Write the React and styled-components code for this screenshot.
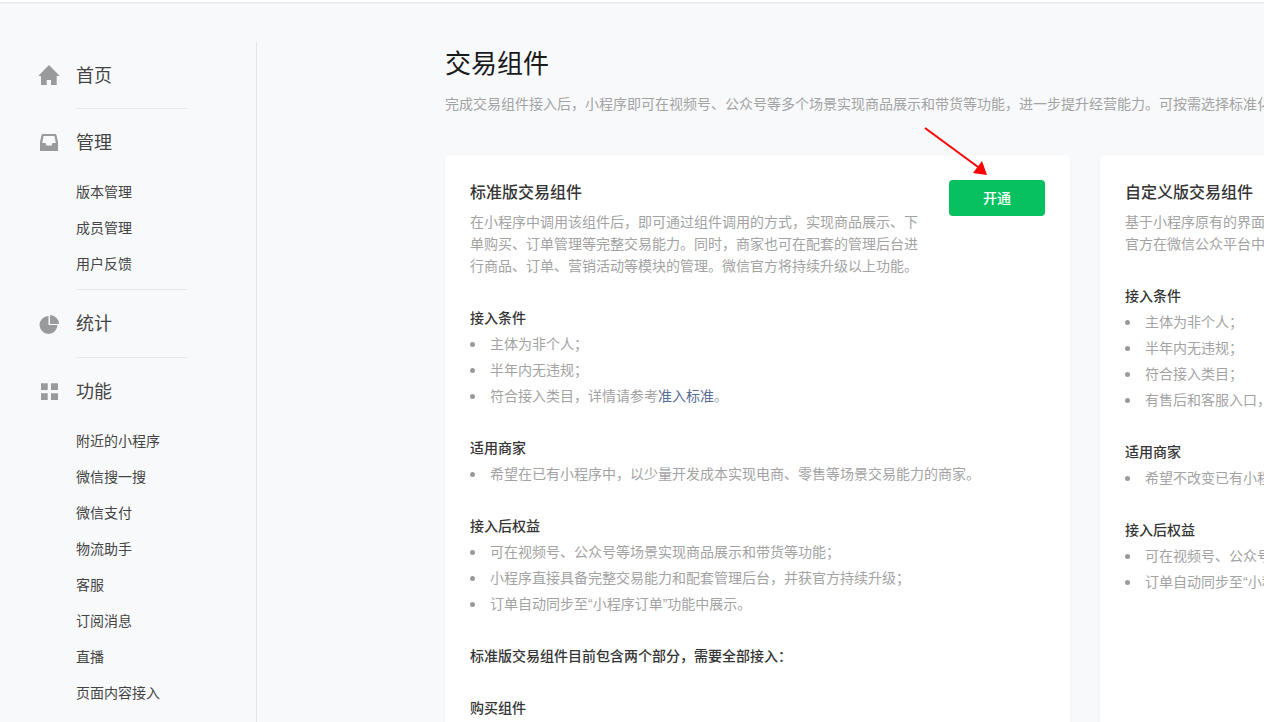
import React from 'react';
import styled, { createGlobalStyle } from 'styled-components';

const FONT = '"Liberation Sans", "Noto Sans CJK SC", sans-serif';

const GlobalStyle = createGlobalStyle`
  html, body {
    margin: 0;
    padding: 0;
    height: 100%;
    overflow: hidden;
    background: #f8f9fb;
  }
  body {
    font-family: ${FONT};
  }
`;

const Page = styled.div`
  position: relative;
  width: 1264px;
  height: 722px;
  overflow: hidden;
  background: #f8f9fb;
`;

const TopBar = styled.div`
  height: 2px;
  background: #fff;
  box-shadow: 0 1px 2px rgba(0, 0, 0, 0.1);
`;

const Layout = styled.div`
  display: flex;
  padding-top: 40px;
`;

const Sidebar = styled.aside`
  box-sizing: border-box;
  flex: 0 0 257px;
  height: 680px;
  border-right: 1px solid #e7e7eb;
  overflow: hidden;
`;

const NavGroup = styled.div`
  margin-left: 76px;
  width: 111px;
  padding-bottom: ${(p) => p.$pad || 0}px;
  border-bottom: ${(p) => (p.$last ? 'none' : '1px solid #e7e7eb')};
`;

const NavHead = styled.div`
  position: relative;
  height: 66px;
  margin-bottom: ${(p) => (p.$sub ? '-1px' : '0')};
  line-height: 68px;
  font-size: 18px;
  color: #444;
  white-space: nowrap;
`;

const NavIcon = styled.svg`
  position: absolute;
  left: -40px;
  top: 20px;
  width: 26px;
  height: 26px;
  fill: #9a9a9a;
`;

const NavItem = styled.div`
  height: 36px;
  line-height: 36px;
  font-size: 14px;
  color: #444;
  white-space: nowrap;
`;

const Main = styled.main`
  flex: 1;
  min-width: 0;
  padding-left: 188px;
`;

const Title = styled.h1`
  margin: 0;
  height: 42px;
  line-height: 44px;
  font-size: 26px;
  font-weight: 400;
  color: #1a1a1a;
`;

const Intro = styled.p`
  margin: 9px 0 0;
  line-height: 22px;
  font-size: 14px;
  color: #a3a3a3;
  white-space: nowrap;
`;

const Cards = styled.div`
  display: flex;
  gap: 30px;
  margin-top: 40px;
`;

const Card = styled.section`
  box-sizing: border-box;
  flex: 0 0 625px;
  height: 900px;
  padding: 25px;
  background: #fff;
  border-radius: 4px;
  box-shadow: 0 1px 4px rgba(0, 0, 0, 0.03);
`;

const CardHead = styled.div`
  display: flex;
  justify-content: space-between;
  align-items: flex-start;
`;

const CardText = styled.div`
  width: 448px;
  flex-shrink: 0;
`;

const CardTitle = styled.h2`
  margin: 0 0 5px;
  line-height: 26px;
  font-size: 16px;
  font-weight: 500;
  color: #353535;
  white-space: nowrap;
`;

const CardDesc = styled.p`
  margin: 0;
  line-height: 22px;
  font-size: 14px;
  color: #a3a3a3;
`;

const OpenButton = styled.button`
  width: 96px;
  height: 36px;
  padding: 0 0 2px;
  border: none;
  border-radius: 4px;
  background: #07c160;
  color: #fff;
  font: 500 14px ${FONT};
`;

const Block = styled.div`
  margin-top: ${(p) => p.$gap || 26}px;
`;

const BlockTitle = styled.h3`
  margin: 0;
  line-height: 26px;
  font-size: 14px;
  font-weight: 500;
  color: #353535;
`;

const List = styled.ul`
  margin: 0;
  padding: 0;
  list-style: none;
`;

const Item = styled.li`
  position: relative;
  padding-left: 20px;
  line-height: 26px;
  font-size: 14px;
  color: #a3a3a3;
  white-space: nowrap;

  &::before {
    content: '';
    position: absolute;
    left: 0;
    top: 11px;
    width: 5px;
    height: 5px;
    border-radius: 50%;
    background: #9a9a9a;
  }
`;

const TextLink = styled.a`
  color: #576b95;
`;

const Arrow = styled.svg`
  position: absolute;
  left: 920px;
  top: 120px;
  width: 72px;
  height: 60px;
`;

const HomeIcon = () => (
  <NavIcon viewBox="0 0 26 26">
    <path d="M13 3 L23.3 13.4 L23.3 14 L20.7 14 L20.7 23 L15 23 L15 18 L10.7 18 L10.7 23 L5 23 L5 14 L2.7 14 L2.7 13.4 Z" />
  </NavIcon>
);

const InboxIcon = () => (
  <NavIcon viewBox="0 0 26 26">
    <path fillRule="evenodd" d="M7 5 H19 Q20 5 20.5 6 L22 13 V22 H4 V13 L5.5 6 Q6 5 7 5 Z M7.5 7 L6.2 14 H9.5 L10.5 16.5 H15.5 L16.5 14 H19.8 L18.5 7 Z" />
  </NavIcon>
);

const PieIcon = () => (
  <NavIcon viewBox="0 0 26 26">
    <path d="M12.5 6 A9 9 0 1 0 21.5 15 H12.5 Z" />
    <path d="M14 5 A9 9 0 0 1 23 14 H14 Z" />
  </NavIcon>
);

const GridIcon = () => (
  <NavIcon viewBox="0 0 26 26">
    <path d="M5 5.3 H11.7 V12 H5 Z M15 5.3 H22 V12 H15 Z M5 15.3 H11.7 V22 H5 Z M15 15.3 H22 V22 H15 Z" />
  </NavIcon>
);

const App = () => (
  <Page>
    <GlobalStyle />
    <TopBar />
    <Layout>
      <Sidebar>
        <NavGroup>
          <NavHead><HomeIcon />首页</NavHead>
        </NavGroup>
        <NavGroup $pad={7}>
          <NavHead $sub><InboxIcon />管理</NavHead>
          <NavItem>版本管理</NavItem>
          <NavItem>成员管理</NavItem>
          <NavItem>用户反馈</NavItem>
        </NavGroup>
        <NavGroup $pad={1}>
          <NavHead><PieIcon />统计</NavHead>
        </NavGroup>
        <NavGroup $last>
          <NavHead $sub><GridIcon />功能</NavHead>
          <NavItem>附近的小程序</NavItem>
          <NavItem>微信搜一搜</NavItem>
          <NavItem>微信支付</NavItem>
          <NavItem>物流助手</NavItem>
          <NavItem>客服</NavItem>
          <NavItem>订阅消息</NavItem>
          <NavItem>直播</NavItem>
          <NavItem>页面内容接入</NavItem>
        </NavGroup>
      </Sidebar>
      <Main>
        <Title>交易组件</Title>
        <Intro>完成交易组件接入后，小程序即可在视频号、公众号等多个场景实现商品展示和带货等功能，进一步提升经营能力。可按需选择标准化</Intro>
        <Cards>
          <Card>
            <CardHead>
              <CardText>
                <CardTitle>标准版交易组件</CardTitle>
                <CardDesc>在小程序中调用该组件后，即可通过组件调用的方式，实现商品展示、下单购买、订单管理等完整交易能力。同时，商家也可在配套的管理后台进行商品、订单、营销活动等模块的管理。微信官方将持续升级以上功能。</CardDesc>
              </CardText>
              <OpenButton>开通</OpenButton>
            </CardHead>
            <Block $gap={28}>
              <BlockTitle>接入条件</BlockTitle>
              <List>
                <Item>主体为非个人；</Item>
                <Item>半年内无违规；</Item>
                <Item>符合接入类目，详情请参考<TextLink>准入标准</TextLink>。</Item>
              </List>
            </Block>
            <Block>
              <BlockTitle>适用商家</BlockTitle>
              <List>
                <Item>希望在已有小程序中，以少量开发成本实现电商、零售等场景交易能力的商家。</Item>
              </List>
            </Block>
            <Block>
              <BlockTitle>接入后权益</BlockTitle>
              <List>
                <Item>可在视频号、公众号等场景实现商品展示和带货等功能；</Item>
                <Item>小程序直接具备完整交易能力和配套管理后台，并获官方持续升级；</Item>
                <Item>订单自动同步至“小程序订单”功能中展示。</Item>
              </List>
            </Block>
            <Block>
              <BlockTitle>标准版交易组件目前包含两个部分，需要全部接入：</BlockTitle>
            </Block>
            <Block>
              <BlockTitle>购买组件</BlockTitle>
            </Block>
          </Card>
          <Card>
            <CardHead>
              <CardText>
                <CardTitle>自定义版交易组件</CardTitle>
                <CardDesc>基于小程序原有的界面和交易流程，接入后即可在视频号等场景中使用。官方在微信公众平台中提供配套的管理能力。</CardDesc>
              </CardText>
            </CardHead>
            <Block $gap={28}>
              <BlockTitle>接入条件</BlockTitle>
              <List>
                <Item>主体为非个人；</Item>
                <Item>半年内无违规；</Item>
                <Item>符合接入类目；</Item>
                <Item>有售后和客服入口，</Item>
              </List>
            </Block>
            <Block>
              <BlockTitle>适用商家</BlockTitle>
              <List>
                <Item>希望不改变已有小程序</Item>
              </List>
            </Block>
            <Block>
              <BlockTitle>接入后权益</BlockTitle>
              <List>
                <Item>可在视频号、公众号等场景</Item>
                <Item>订单自动同步至“小程序订单”</Item>
              </List>
            </Block>
          </Card>
        </Cards>
      </Main>
    </Layout>
    <Arrow viewBox="0 0 72 60">
      <line x1="5" y1="8" x2="58" y2="47" stroke="#f00" strokeWidth="2" />
      <path d="M67 55 L53 53 L62 41 Z" fill="#f00" />
    </Arrow>
  </Page>
);

export default App;
